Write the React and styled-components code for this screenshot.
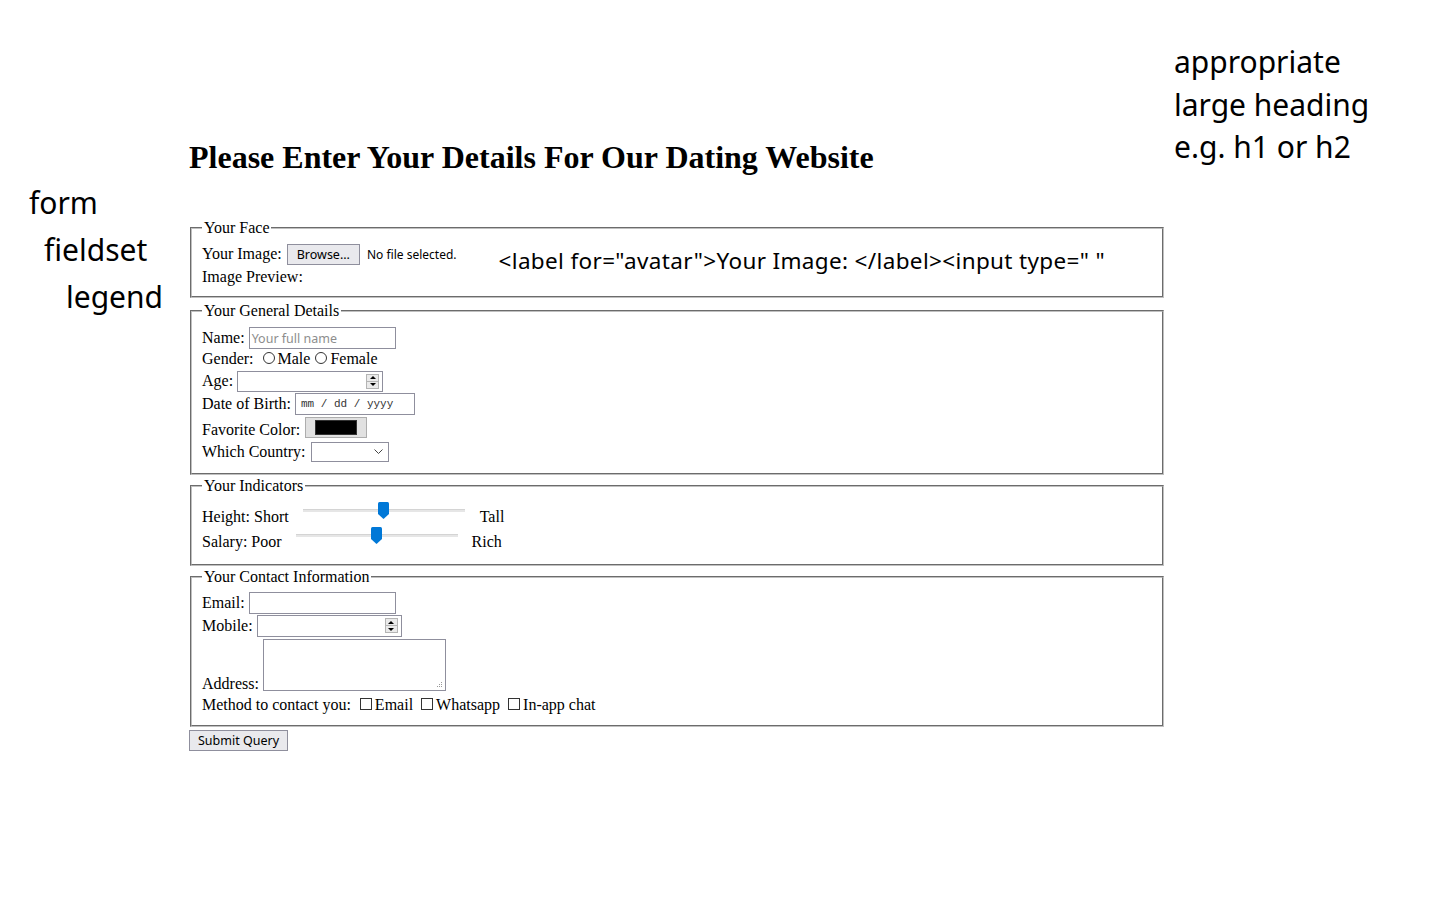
import React from 'react';
import styled, { createGlobalStyle } from 'styled-components';

const GlobalStyle = createGlobalStyle`
  body {
    margin: 0;
    background: #fff;
    color: #000;
    font-family: "Liberation Serif", "Times New Roman", serif;
    font-size: 16px;
  }
`;

const Page = styled.div`
  display: grid;
  grid-template-columns: 189px 977px 1fr;
  min-height: 923px;
`;

const NoteColumn = styled.div`
  padding-top: ${p => p.top}px;
  padding-left: ${p => p.left || 0}px;
  font-family: "Noto Sans", "Open Sans", sans-serif;
  font-size: 30px;
  line-height: ${p => p.lh}px;
  color: #000;
`;

const NoteLine = styled.div`
  padding-left: ${p => p.indent || 0}px;
  white-space: nowrap;
`;

const Main = styled.form`
  display: flex;
  flex-direction: column;
  align-items: flex-start;
`;

const Heading = styled.h2`
  margin: 139px 0 44px;
  font-family: "Liberation Serif", "Times New Roman", serif;
  font-weight: bold;
  font-size: 32px;
  line-height: 36px;
  white-space: nowrap;
`;

const Fieldset = styled.fieldset`
  align-self: stretch;
  margin: ${p => p.mt || 0}px 2px 0 1px;
  padding: ${p => p.pt || 7}px 10px 10px;
  border: 2px groove #c0c0c0;
  min-width: 0;
`;

const Legend = styled.legend`
  padding: 0 2px;
  line-height: 18px;
`;

const FaceBody = styled.div`
  display: flex;
  align-items: center;
  gap: 42px;
`;

const Stack = styled.div`
  display: flex;
  flex-direction: column;
`;

const Row = styled.div`
  display: flex;
  align-items: ${p => p.align || 'center'};
  box-sizing: border-box;
  height: ${p => p.h}px;
  padding-top: ${p => p.pt || 0}px;
  white-space: pre;
`;

const CodeNote = styled.div`
  font-family: "Noto Sans", "Open Sans", sans-serif;
  font-size: 22.5px;
  letter-spacing: 0.35px;
  white-space: pre;
  margin-bottom: 8px;
`;

const SysButton = styled.button`
  height: ${p => p.h || 21}px;
  margin-left: ${p => p.ml || 0}px;
  padding: 0 ${p => p.px || 9}px;
  background: #e9e9ed;
  border: 1px solid #8f8f9d;
  border-radius: 0;
  font-family: "Noto Sans", "Open Sans", sans-serif;
  font-size: 12.5px;
  color: #000;
`;

const SmallText = styled.span`
  margin-left: 7px;
  font-family: "Noto Sans", "Open Sans", sans-serif;
  font-size: 12px;
`;

const Field = styled.div`
  display: flex;
  align-items: center;
  justify-content: ${p => p.justify || 'flex-start'};
  box-sizing: border-box;
  width: ${p => p.w}px;
  height: ${p => p.h}px;
  margin-left: ${p => p.ml || 4}px;
  padding: 0 ${p => p.px ?? 2}px;
  border: 1px solid #8f8f9d;
  background: #fff;
`;

const Placeholder = styled.span`
  font-family: "Noto Sans", "Open Sans", sans-serif;
  font-size: 12.5px;
  color: #8d8d8d;
`;

const DateText = styled.span`
  font-family: "Liberation Mono", monospace;
  font-size: 11px;
  color: #333;
  padding-left: 3px;
`;

const Spinner = styled.div`
  display: flex;
  flex-direction: column;
  width: 13px;
  height: 15px;
  border: 1px solid #b4b4b4;
  background: #eaeaea;
  box-sizing: border-box;
`;

const SpinHalf = styled.div`
  flex: 1;
  display: flex;
  align-items: center;
  justify-content: center;
  & + & { border-top: 1px solid #b4b4b4; }
`;

const Tri = styled.span`
  width: 0;
  height: 0;
  border-left: 3px solid transparent;
  border-right: 3px solid transparent;
  ${p => p.down ? 'border-top: 3px solid #000;' : 'border-bottom: 3px solid #000;'}
`;

const ColorWell = styled.div`
  display: flex;
  align-items: center;
  justify-content: center;
  box-sizing: border-box;
  width: 62px;
  height: 21px;
  margin: 0 0 5px 5px;
  background: #e1e1e1;
  border: 1px solid #adadad;
`;

const Swatch = styled.div`
  width: 42px;
  height: 15px;
  box-sizing: border-box;
  background: #000;
  border: 1px solid #333;
`;

const Radio = styled.span`
  display: inline-block;
  box-sizing: border-box;
  width: 12px;
  height: 12px;
  margin: 0 3px 2px ${p => p.ml ?? 5}px;
  border: 1px solid #333;
  border-radius: 50%;
`;

const Check = styled.span`
  display: inline-block;
  box-sizing: border-box;
  width: 12px;
  height: 12px;
  margin: 0 3px 2px ${p => p.ml ?? 4}px;
  border: 1px solid #333;
`;

const Slider = styled.div`
  display: flex;
  align-items: center;
  justify-content: center;
  width: 162px;
  height: 17px;
  margin: 0 ${p => p.mr}px 12px ${p => p.ml}px;
  background: linear-gradient(#fff 0 7px, #d4d4d4 7px 8px, #e6e6e6 8px 10px, #fff 10px);
`;

const Textarea = styled.div`
  display: flex;
  align-items: flex-end;
  justify-content: flex-end;
  box-sizing: border-box;
  width: 183px;
  height: 52px;
  margin: 0 0 2px 4px;
  padding: 2px;
  border: 1px solid #8f8f9d;
`;

const SubmitWrap = styled.div`
  margin-top: 3px;
`;

function NumSpin() {
  return (
    <Spinner>
      <SpinHalf><Tri /></SpinHalf>
      <SpinHalf><Tri down /></SpinHalf>
    </Spinner>
  );
}

function Thumb() {
  return (
    <svg width="11" height="17" viewBox="0 0 11 17">
      <path d="M0 1.5 Q0 0 1.5 0 H9.5 Q11 0 11 1.5 V12 L5.5 17 L0 12 Z" fill="#0078d7" />
    </svg>
  );
}

function Chevron() {
  return (
    <svg width="9" height="6" viewBox="0 0 9 6">
      <polyline points="0.5,0.5 4.5,4.5 8.5,0.5" fill="none" stroke="#444" strokeWidth="1" />
    </svg>
  );
}

function Grip() {
  return (
    <svg width="7" height="7" viewBox="0 0 7 7">
      <rect x="5" y="1" width="1" height="1" fill="#999" />
      <rect x="3" y="3" width="1" height="1" fill="#999" />
      <rect x="5" y="3" width="1" height="1" fill="#999" />
      <rect x="1" y="5" width="1" height="1" fill="#999" />
      <rect x="3" y="5" width="1" height="1" fill="#999" />
      <rect x="5" y="5" width="1" height="1" fill="#999" />
    </svg>
  );
}

export default function App() {
  return (
    <>
      <GlobalStyle />
      <Page>
        <NoteColumn top={179} lh={47}>
          <NoteLine indent={29}>form</NoteLine>
          <NoteLine indent={44}>fieldset</NoteLine>
          <NoteLine indent={66}>legend</NoteLine>
        </NoteColumn>

        <Main onSubmit={e => e.preventDefault()}>
          <Heading>Please Enter Your Details For Our Dating Website</Heading>

          <Fieldset pt={6}>
            <Legend>Your Face</Legend>
            <FaceBody>
              <Stack>
                <Row h={22}>
                  Your Image:<SysButton ml={5} type="button">Browse...</SysButton>
                  <SmallText>No file selected.</SmallText>
                </Row>
                <Row h={21} pt={2}>Image Preview:</Row>
              </Stack>
              <CodeNote>{'<label for="avatar">Your Image: </label><input type=" "'}</CodeNote>
            </FaceBody>
          </Fieldset>

          <Fieldset mt={4}>
            <Legend>Your General Details</Legend>
            <Row h={22}>
              Name:<Field w={147} h={22}><Placeholder>Your full name</Placeholder></Field>
            </Row>
            <Row h={20}>
              Gender: <Radio />Male<Radio />Female
            </Row>
            <Row h={24}>
              Age:<Field w={146} h={21} justify="flex-end" px={3}><NumSpin /></Field>
            </Row>
            <Row h={22}>
              Date of Birth:<Field w={120} h={22}><DateText>mm / dd / yyyy</DateText></Field>
            </Row>
            <Row h={26} pt={4}>
              Favorite Color:<ColorWell><Swatch /></ColorWell>
            </Row>
            <Row h={22}>
              Which Country:<Field w={78} h={20} ml={5} justify="flex-end" px={5}><Chevron /></Field>
            </Row>
          </Fieldset>

          <Fieldset mt={2}>
            <Legend>Your Indicators</Legend>
            <Row h={27} pt={2}>
              Height: Short<Slider ml={14} mr={15}><Thumb /></Slider>Tall
            </Row>
            <Row h={25}>
              Salary: Poor<Slider ml={14} mr={14}><Thumb /></Slider>Rich
            </Row>
          </Fieldset>

          <Fieldset mt={2} pt={6}>
            <Legend>Your Contact Information</Legend>
            <Row h={22}>
              Email:<Field w={147} h={22} />
            </Row>
            <Row h={23}>
              Mobile:<Field w={145} h={22} justify="flex-end" px={3}><NumSpin /></Field>
            </Row>
            <Row h={56} align="flex-end">
              Address:<Textarea><Grip /></Textarea>
            </Row>
            <Row h={22} pt={2}>
              Method to contact you: <Check ml={5} />Email <Check />Whatsapp <Check />In-app chat
            </Row>
          </Fieldset>

          <SubmitWrap>
            <SysButton h={21} px={8} type="submit">Submit Query</SysButton>
          </SubmitWrap>
        </Main>

        <NoteColumn top={41} left={8} lh={42.5}>
          <NoteLine>appropriate</NoteLine>
          <NoteLine>large heading</NoteLine>
          <NoteLine>e.g. h1 or h2</NoteLine>
        </NoteColumn>
      </Page>
    </>
  );
}
